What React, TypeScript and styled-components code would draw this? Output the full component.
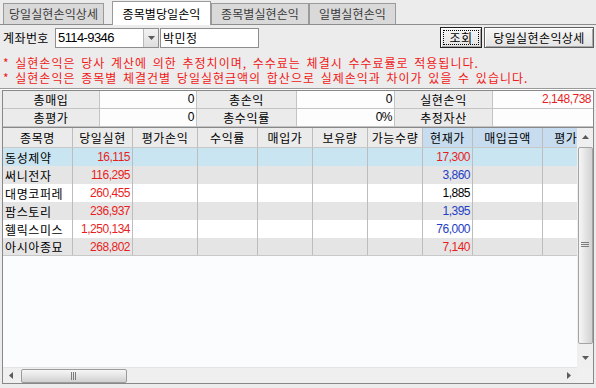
import React from 'react';
import styled, { createGlobalStyle } from 'styled-components';

const KR = `'Noto Sans CJK KR', 'Noto Sans', sans-serif`;
const NUM = `'Liberation Sans', Arial, sans-serif`;

const GlobalStyle = createGlobalStyle`
  html, body { margin: 0; padding: 0; background: #ececec; }
  body { font-family: ${KR}; font-size: 12px; color: #000; letter-spacing: 0.4px; }
`;

const Screen = styled.div`
  width: 596px;
  height: 388px;
  overflow: hidden;
  background: #ececec;
  display: flex;
  flex-direction: column;
`;

/* ---------- tabs ---------- */

const TabBar = styled.div`
  display: flex;
  align-items: flex-end;
  height: 25px;
  box-sizing: border-box;
  padding-left: 3px;
  border-bottom: 1px solid #8c8c8c;
`;

const Tab = styled.div<{ $w: number; $active?: boolean; $gap?: number }>`
  width: ${p => p.$w}px;
  height: ${p => (p.$active ? 24 : 21)}px;
  margin-bottom: ${p => (p.$active ? -1 : 0)}px;
  margin-left: ${p => p.$gap ?? 0}px;
  box-sizing: border-box;
  border: 1px solid #9a9a9a;
  border-bottom: none;
  background: ${p => (p.$active ? '#ffffff' : '#d9d9d9')};
  color: ${p => (p.$active ? '#000' : '#3c3c3c')};
  letter-spacing: 0.1px;
  display: flex;
  align-items: center;
  justify-content: center;
  line-height: 1;
`;

/* ---------- account row ---------- */

const AccountRow = styled.div`
  display: flex;
  align-items: center;
  height: 21px;
  margin-top: 2px;
  padding: 0 2px 0 3px;
`;

const Label = styled.span`
  width: 52px;
  line-height: 1;
`;

const Select = styled.div`
  width: 104px;
  height: 20px;
  box-sizing: border-box;
  border: 1px solid #8e8e8e;
  background: #fff;
  display: flex;
  align-items: stretch;
`;

const SelectText = styled.span`
  flex: 1;
  padding-left: 2px;
  font-family: ${NUM};
  font-size: 13px;
  letter-spacing: -0.6px;
  line-height: 18px;
`;

const DropButton = styled.span`
  width: 14px;
  background: linear-gradient(#f2f2f2, #dedede);
  border-left: 1px solid #b8b8b8;
  display: flex;
  align-items: center;
  justify-content: center;
`;

const NameInput = styled.div`
  width: 99px;
  height: 20px;
  margin-left: 1px;
  box-sizing: border-box;
  border: 1px solid #8e8e8e;
  background: #fff;
  padding-left: 2px;
  line-height: 17px;
`;

const Spacer = styled.div`
  flex: 1;
`;

const Button = styled.button<{ $w: number; $default?: boolean }>`
  width: ${p => p.$w}px;
  height: 21px;
  margin-left: 2px;
  padding: 0;
  box-sizing: border-box;
  font-family: ${KR};
  font-size: 12px;
  letter-spacing: 0.4px;
  color: #000;
  line-height: 1;
  border: 1px solid ${p => (p.$default ? '#202020' : '#5e5e5e')};
  border-radius: 0;
  background: linear-gradient(#f7f7f7, #e3e3e3);
  box-shadow: inset 1px 1px #ffffff, inset -1px -1px #a8a8a8;
  outline: ${p => (p.$default ? '1px dotted #000' : 'none')};
  outline-offset: -4px;
`;

/* ---------- notices ---------- */

const Notice = styled.div`
  margin-top: 7px;
  padding-left: 3px;
  color: #f01818;
  letter-spacing: 1px;
  word-spacing: 2px;
  white-space: nowrap;
`;

const NoticeLine = styled.div`
  height: 15px;
  line-height: 15px;
`;

const Separator = styled.div`
  margin-top: 3px;
  height: 0;
  border-top: 1px solid #9a9a9a;
  border-bottom: 1px solid #ffffff;
`;

/* ---------- summary ---------- */

const Summary = styled.div`
  margin: 0 2px;
  border: 1px solid #888;
  border-bottom: none;
  display: grid;
  grid-template-columns: 97px 97px 100px 98px 98px 1fr;
  grid-auto-rows: 18px;
`;

const SumCell = styled.div<{ $label?: boolean; $red?: boolean }>`
  box-sizing: border-box;
  border-right: 1px solid #c4c4c4;
  border-bottom: 1px solid #c4c4c4;
  background: ${p => (p.$label ? '#ebebeb' : '#fdfdfd')};
  text-align: ${p => (p.$label ? 'center' : 'right')};
  padding-right: ${p => (p.$label ? 0 : 2)}px;
  color: ${p => (p.$red ? '#e81e1e' : '#000')};
  font-family: ${p => (p.$label ? KR : NUM)};
  letter-spacing: ${p => (p.$label ? 0.6 : -0.5)}px;
  line-height: 17px;
  &:nth-child(6n) {
    border-right: none;
  }
`;

/* ---------- grid ---------- */

const GridBox = styled.div`
  margin: 0 2px;
  height: 257px;
  box-sizing: border-box;
  border: 1px solid #888;
  display: grid;
  grid-template-columns: 1fr 16px;
  grid-template-rows: 1fr 16px;
`;

const Sheet = styled.div`
  overflow: hidden;
  background: #fbfcfe;
`;

const Row = styled.div<{ $bg: string; $h?: number; $line?: boolean }>`
  display: flex;
  height: ${p => p.$h ?? 18}px;
  background: ${p => p.$bg};
  box-sizing: border-box;
  border-bottom: ${p => (p.$line ? '1px solid #c8c8c8' : 'none')};
  width: max-content;
`;

const Cell = styled.div<{ $w: number; $align?: string; $color?: string; $bg?: string; $num?: boolean }>`
  width: ${p => p.$w}px;
  flex-shrink: 0;
  box-sizing: border-box;
  border-right: 1px solid #bdbdbd;
  padding: 0 2px;
  color: ${p => p.$color ?? '#000'};
  background: ${p => p.$bg ?? 'transparent'};
  font-family: ${p => (p.$num ? NUM : KR)};
  letter-spacing: ${p => (p.$num ? -0.5 : 0.6)}px;
  white-space: nowrap;
  overflow: hidden;
  display: flex;
  align-items: center;
  justify-content: ${p => (p.$align === 'right' ? 'flex-end' : p.$align === 'center' ? 'center' : 'flex-start')};
`;

const VScroll = styled.div`
  background: #efefef;
  display: flex;
  flex-direction: column;
  align-items: center;
`;

const HScroll = styled.div`
  background: #efefef;
  display: flex;
  align-items: center;
  border-top: 1px solid #e4e4e4;
  box-sizing: border-box;
`;

const ArrowBox = styled.div<{ $size: number; $vertical?: boolean }>`
  ${p => (p.$vertical ? `height: ${p.$size}px; width: 16px;` : `width: ${p.$size}px; height: 15px;`)}
  flex-shrink: 0;
  display: flex;
  align-items: center;
  justify-content: center;
`;

const VThumb = styled.div`
  width: 15px;
  height: 197px;
  margin-top: 1px;
  box-sizing: border-box;
  border: 1px solid #a4a4a4;
  border-radius: 2px;
  background: linear-gradient(to right, #f6f6f6, #e6e6e6 45%, #d2d2d2);
  display: flex;
  align-items: center;
  justify-content: center;
`;

const HThumb = styled.div`
  width: 106px;
  height: 14px;
  margin-left: 2px;
  box-sizing: border-box;
  border: 1px solid #9c9c9c;
  border-radius: 2px;
  background: linear-gradient(#f6f6f6, #e6e6e6 45%, #d0d0d0);
  display: flex;
  align-items: center;
  justify-content: center;
`;

const Corner = styled.div`
  background: #f0f0f0;
`;

/* ---------- data ---------- */

const columns = [
  { name: '종목명', w: 70 },
  { name: '당일실현', w: 60 },
  { name: '평가손익', w: 65 },
  { name: '수익률', w: 60 },
  { name: '매입가', w: 55 },
  { name: '보유량', w: 55 },
  { name: '가능수량', w: 55 },
  { name: '현재가', w: 50, blue: true },
  { name: '매입금액', w: 70, blue: true },
  { name: '평가금액', w: 70, blue: true },
];

const RED = '#e81e1e';
const BLUE = '#1e40c4';

const rows = [
  { name: '동성제약', today: '16,115', price: '17,300', color: RED },
  { name: '써니전자', today: '116,295', price: '3,860', color: BLUE },
  { name: '대명코퍼레', today: '260,455', price: '1,885', color: '#000' },
  { name: '팜스토리', today: '236,937', price: '1,395', color: BLUE },
  { name: '헬릭스미스', today: '1,250,134', price: '76,000', color: BLUE },
  { name: '아시아종묘', today: '268,802', price: '7,140', color: RED },
];

const rowBg = (i: number) => (i === 0 ? '#c9e5f1' : i % 2 === 1 ? '#e5e5e5' : '#ffffff');

const Tri = ({ dir }: { dir: 'up' | 'down' | 'left' | 'right' }) => {
  const pts = {
    up: '0,4 7,4 3.5,0',
    down: '0,0 7,0 3.5,4',
    left: '4,0 4,7 0,3.5',
    right: '0,0 0,7 4,3.5',
  }[dir];
  const horiz = dir === 'left' || dir === 'right';
  return (
    <svg width={horiz ? 4 : 7} height={horiz ? 7 : 4} viewBox={horiz ? '0 0 4 7' : '0 0 7 4'}>
      <polygon points={pts} fill="#5a5a5a" />
    </svg>
  );
};

const Grip = ({ vertical }: { vertical?: boolean }) => (
  <svg width={vertical ? 8 : 7} height={vertical ? 7 : 8}>
    {[0, 2, 4].map(o =>
      vertical ? (
        <rect key={o} x={0} y={o} width={8} height={1} fill="#7c7c7c" />
      ) : (
        <rect key={o} x={o} y={0} width={1} height={8} fill="#7c7c7c" />
      )
    )}
  </svg>
);

export default function App() {
  return (
    <Screen>
      <GlobalStyle />
      <TabBar>
        <Tab $w={101}>당일실현손익상세</Tab>
        <Tab $w={99} $gap={8} $active>
          종목별당일손익
        </Tab>
        <Tab $w={98}>종목별실현손익</Tab>
        <Tab $w={87}>일별실현손익</Tab>
      </TabBar>

      <AccountRow>
        <Label>계좌번호</Label>
        <Select>
          <SelectText>5114-9346</SelectText>
          <DropButton>
            <Tri dir="down" />
          </DropButton>
        </Select>
        <NameInput>박민정</NameInput>
        <Spacer />
        <Button $w={42} $default>
          조회
        </Button>
        <Button $w={110}>당일실현손익상세</Button>
      </AccountRow>

      <Notice>
        <NoticeLine>* 실현손익은 당사 계산에 의한 추정치이며, 수수료는 체결시 수수료률로 적용됩니다.</NoticeLine>
        <NoticeLine>* 실현손익은 종목별 체결건별 당일실현금액의 합산으로 실제손익과 차이가 있을 수 있습니다.</NoticeLine>
      </Notice>
      <Separator />

      <Summary>
        <SumCell $label>총매입</SumCell>
        <SumCell>0</SumCell>
        <SumCell $label>총손익</SumCell>
        <SumCell>0</SumCell>
        <SumCell $label>실현손익</SumCell>
        <SumCell $red>2,148,738</SumCell>
        <SumCell $label>총평가</SumCell>
        <SumCell>0</SumCell>
        <SumCell $label>총수익률</SumCell>
        <SumCell>0%</SumCell>
        <SumCell $label>추정자산</SumCell>
        <SumCell />
      </Summary>

      <GridBox>
        <Sheet>
          <Row $bg="#ebebeb" $h={20} $line>
            {columns.map(c => (
              <Cell key={c.name} $w={c.w} $align="center" $bg={c.blue ? '#c7dcef' : undefined}>
                {c.name}
              </Cell>
            ))}
          </Row>
          {rows.map((r, i) => (
            <Row key={r.name} $bg={rowBg(i)} $line={i === rows.length - 1}>
              <Cell $w={70}>{r.name}</Cell>
              <Cell $w={60} $align="right" $color={RED} $num>
                {r.today}
              </Cell>
              <Cell $w={65} />
              <Cell $w={60} />
              <Cell $w={55} />
              <Cell $w={55} />
              <Cell $w={55} />
              <Cell $w={50} $align="right" $color={r.color} $num>
                {r.price}
              </Cell>
              <Cell $w={70} />
              <Cell $w={70} />
            </Row>
          ))}
        </Sheet>

        <VScroll>
          <ArrowBox $size={18} $vertical>
            <Tri dir="up" />
          </ArrowBox>
          <VThumb>
            <Grip vertical />
          </VThumb>
          <Spacer />
          <ArrowBox $size={18} $vertical>
            <Tri dir="down" />
          </ArrowBox>
        </VScroll>

        <HScroll>
          <ArrowBox $size={16}>
            <Tri dir="left" />
          </ArrowBox>
          <HThumb>
            <Grip />
          </HThumb>
          <Spacer />
          <ArrowBox $size={16}>
            <Tri dir="right" />
          </ArrowBox>
        </HScroll>
        <Corner />
      </GridBox>
    </Screen>
  );
}
